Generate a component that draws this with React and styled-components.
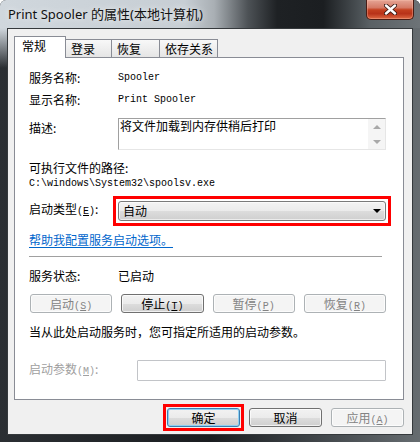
import React from "react";
import styled, { createGlobalStyle } from "styled-components";

const CJK = `"Noto Sans CJK SC", "Noto Sans", sans-serif`;
const MONO = `"Liberation Mono", "DejaVu Sans Mono", monospace`;

const Global = createGlobalStyle`
  html, body { margin: 0; padding: 0; background: #ffffff; }
  body { font-family: ${CJK}; }
  #root { width: 420px; height: 442px; }
`;

const Window = styled.div`
  box-sizing: border-box;
  width: 420px;
  height: 442px;
  display: flex;
  flex-direction: column;
  border-radius: 6px 6px 0 0;
  overflow: hidden;
  background: #1f2225;
`;

const TitleBar = styled.div`
  flex: none;
  height: 28px;
  display: flex;
  align-items: flex-start;
  justify-content: space-between;
  padding: 0 6px 0 8px;
  background: linear-gradient(
    to right,
    #d0d7dd 0%,
    #c7ced4 44%,
    #a9afb4 51%,
    #4d5256 59%,
    #1e2124 66%,
    #1b1e21 77%,
    #596064 88%,
    #6d7377 100%
  );
`;

const Title = styled.span`
  margin-top: 6px;
  font-family: "Noto Sans", ${CJK};
  font-size: 13px;
  line-height: 16px;
  color: #111;
  text-shadow: 0 0 6px rgba(255, 255, 255, 0.85);
  white-space: nowrap;
`;

const CloseButton = styled.div`
  box-sizing: border-box;
  width: 48px;
  height: 20px;
  display: flex;
  align-items: center;
  justify-content: center;
  border: 1px solid #4a1d15;
  border-top: none;
  border-radius: 0 0 5px 5px;
  background: linear-gradient(
    #e5a595 0%,
    #d57a66 40%,
    #c4401f 52%,
    #b83219 72%,
    #df6a43 100%
  );
  box-shadow: inset 0 0 0 1px rgba(255, 200, 180, 0.35);
`;

const Frame = styled.div`
  flex: 1;
  display: flex;
  padding: 0 7px 7px 7px;
  background:
    linear-gradient(to bottom, rgba(208, 215, 221, 1) 0px, rgba(208, 215, 221, 0) 40px) left top / 45% 100% no-repeat,
    linear-gradient(to right, #2b2f33 0%, #1a1d20 50%, #3b4044 72%, #666c70 100%);
`;

const Client = styled.div`
  flex: 1;
  box-sizing: border-box;
  display: flex;
  flex-direction: column;
  border: 1px solid #35393c;
  background: #f0f0f0;
  padding: 7px 8px 7px 6px;
  font-family: ${CJK};
  font-size: 12px;
  color: #000;
`;

const TabRow = styled.div`
  display: flex;
  align-items: flex-end;
  height: 21px;
  position: relative;
  z-index: 1;
`;

const Tab = styled.div`
  box-sizing: border-box;
  width: ${(p) => p.$w}px;
  height: ${(p) => (p.$active ? 22 : 18)}px;
  margin-bottom: ${(p) => (p.$active ? -1 : 0)}px;
  margin-left: ${(p) => (p.$first ? 0 : -1)}px;
  display: flex;
  align-items: center;
  padding-left: ${(p) => (p.$active ? 7 : 5)}px;
  padding-bottom: ${(p) => (p.$active ? 3 : 0)}px;
  border: 1px solid #898c95;
  border-bottom: none;
  background: ${(p) => (p.$active ? "#ffffff" : "linear-gradient(#f8f8f8, #e5e5e5)")};
  position: relative;
  z-index: ${(p) => (p.$active ? 2 : 1)};
  line-height: 14px;
  white-space: nowrap;
`;

const Panel = styled.div`
  box-sizing: border-box;
  height: 343px;
  display: flex;
  flex-direction: column;
  border: 1px solid #898c95;
  background: #ffffff;
  padding: 10px 17px 0 14px;
`;

const InfoRow = styled.div`
  display: grid;
  grid-template-columns: ${(p) => p.$label || 89}px 1fr;
  align-items: ${(p) => p.$align || "center"};
  margin-top: ${(p) => p.$mt || 0}px;
  min-height: ${(p) => p.$h || 20}px;
`;

const Label = styled.span`
  line-height: 20px;
  white-space: nowrap;
  color: ${(p) => (p.$disabled ? "#a0a0a0" : "#000")};
`;

const MonoValue = styled.span`
  font-family: ${MONO};
  font-size: 10px;
  line-height: 20px;
  white-space: nowrap;
`;

const Mn = styled.span`
  font-family: ${MONO};
  font-size: 10px;
  & u { text-decoration: underline; text-underline-offset: 1px; }
`;

const DescBox = styled.div`
  box-sizing: border-box;
  height: 32px;
  display: flex;
  background: #ffffff;
  border-top: 1px solid #a0a0a0;
  border-left: 1px solid #a0a0a0;
  border-right: 1px solid #e6e6e6;
  border-bottom: 1px solid #e6e6e6;
`;

const DescText = styled.div`
  flex: 1;
  padding: 0 0 0 1px;
  line-height: 14px;
`;

const ScrollTrack = styled.div`
  width: 17px;
  display: flex;
  flex-direction: column;
  align-items: center;
  padding-top: 6px;
  gap: 11px;
  background: #f5f5f5;
`;

const Arrow = styled.span`
  width: 0;
  height: 0;
  border-left: 4px solid transparent;
  border-right: 4px solid transparent;
  ${(p) =>
    p.$down
      ? `border-top: 4px solid ${p.$color || "#a9a9a9"};`
      : `border-bottom: 4px solid ${p.$color || "#a9a9a9"};`}
`;

const Line = styled.div`
  margin-top: ${(p) => p.$mt || 0}px;
  line-height: 16px;
  white-space: nowrap;
`;

const MonoLine = styled(Line)`
  font-family: ${MONO};
  font-size: 10px;
`;

const Highlight = styled.div`
  border: 3px solid #ff0000;
  padding: ${(p) => p.$pad ?? 2}px;
  margin: ${(p) => -(3 + (p.$pad ?? 2))}px;
  display: flex;
`;

const Combo = styled.div`
  flex: 1;
  box-sizing: border-box;
  height: 20px;
  display: flex;
  align-items: center;
  justify-content: space-between;
  padding: 0 4px 0 4px;
  border: 1px solid #7a7a7a;
  border-radius: 3px;
  background: linear-gradient(#f3f3f3 0%, #ebebeb 50%, #dddddd 50%, #cfcfcf 100%);
  box-shadow: inset 0 0 0 1px rgba(255, 255, 255, 0.6);
  line-height: 16px;
`;

const HelpLink = styled.a`
  align-self: flex-start;
  margin-top: 10px;
  line-height: 16px;
  color: #0066cc;
  text-decoration: underline;
  text-underline-offset: 2px;
  cursor: pointer;
`;

const Separator = styled.div`
  margin-top: 8px;
  width: 353px;
  height: 1px;
  background: #a0a0a0;
`;

const ButtonGrid = styled.div`
  display: grid;
  grid-template-columns: repeat(4, 1fr);
  gap: 9px;
  margin-top: 8px;
  padding-left: 1px;
`;

const Btn = styled.button`
  box-sizing: border-box;
  height: 19px;
  width: ${(p) => (p.$w ? `${p.$w}px` : "auto")};
  padding: 0;
  font-family: ${CJK};
  font-size: 12px;
  line-height: 17px;
  border-radius: 3px;
  border: 1px solid ${(p) => (p.disabled ? "#adb2b5" : p.$default ? "#3c7fb1" : "#707070")};
  color: ${(p) => (p.disabled ? "#838383" : "#000")};
  background: ${(p) =>
    p.disabled
      ? "#f4f4f4"
      : "linear-gradient(#f2f2f2 0%, #ebebeb 50%, #dddddd 50%, #cfcfcf 100%)"};
  box-shadow: ${(p) =>
    p.$default
      ? "inset 0 0 0 1px #8fd0f2"
      : "inset 0 0 0 1px rgba(255, 255, 255, 0.7)"};
  white-space: nowrap;
  cursor: default;
`;

const ParamInput = styled.div`
  box-sizing: border-box;
  height: 21px;
  border: 1px solid #c2c4c8;
  border-radius: 1px;
  background: #ffffff;
`;

const Footer = styled.div`
  display: flex;
  justify-content: flex-end;
  gap: 9px;
  margin-top: 8px;
`;

const Mnemonic = ({ k }) => (
  <Mn>
    (<u>{k}</u>)
  </Mn>
);

export default function App() {
  return (
    <>
      <Global />
      <Window>
        <TitleBar>
          <Title>Print Spooler 的属性(本地计算机)</Title>
          <CloseButton>
            <svg width="13" height="11" viewBox="0 0 13 11">
              <path d="M2 1.5 L11 9.5 M11 1.5 L2 9.5" stroke="#3a1a14" strokeWidth="4.2" strokeLinecap="round" />
              <path d="M2 1.5 L11 9.5 M11 1.5 L2 9.5" stroke="#ffffff" strokeWidth="2.4" strokeLinecap="round" />
            </svg>
          </CloseButton>
        </TitleBar>
        <Frame>
          <Client>
            <TabRow>
              <Tab $active $first $w={52}>常规</Tab>
              <Tab $w={47}>登录</Tab>
              <Tab $w={49}>恢复</Tab>
              <Tab $w={59}>依存关系</Tab>
            </TabRow>
            <Panel>
              <InfoRow>
                <Label>服务名称:</Label>
                <MonoValue>Spooler</MonoValue>
              </InfoRow>
              <InfoRow $mt={2}>
                <Label>显示名称:</Label>
                <MonoValue>Print Spooler</MonoValue>
              </InfoRow>
              <InfoRow $mt={8} $align="start">
                <Label>描述:</Label>
                <DescBox>
                  <DescText>将文件加载到内存供稍后打印</DescText>
                  <ScrollTrack>
                    <Arrow />
                    <Arrow $down />
                  </ScrollTrack>
                </DescBox>
              </InfoRow>
              <Line $mt={10}>可执行文件的路径:</Line>
              <MonoLine>C:\windows\System32\spoolsv.exe</MonoLine>
              <InfoRow $mt={7}>
                <Label>
                  启动类型<Mnemonic k="E" />:
                </Label>
                <Highlight>
                  <Combo>
                    <span>自动</span>
                    <Arrow $down $color="#000" />
                  </Combo>
                </Highlight>
              </InfoRow>
              <HelpLink>帮助我配置服务启动选项。</HelpLink>
              <Separator />
              <InfoRow $mt={9} $h={16}>
                <Label>服务状态:</Label>
                <Line>已启动</Line>
              </InfoRow>
              <ButtonGrid>
                <Btn disabled>
                  启动<Mnemonic k="S" />
                </Btn>
                <Btn>
                  停止<Mnemonic k="T" />
                </Btn>
                <Btn disabled>
                  暂停<Mnemonic k="P" />
                </Btn>
                <Btn disabled>
                  恢复<Mnemonic k="R" />
                </Btn>
              </ButtonGrid>
              <Line $mt={11}>当从此处启动服务时，您可指定所适用的启动参数。</Line>
              <InfoRow $mt={19} $label={108} $h={21}>
                <Label $disabled>
                  启动参数<Mnemonic k="M" />:
                </Label>
                <ParamInput />
              </InfoRow>
            </Panel>
            <Footer>
              <Highlight $pad={1}>
                <Btn $default $w={73}>确定</Btn>
              </Highlight>
              <Btn $w={73}>取消</Btn>
              <Btn disabled $w={73}>
                应用<Mnemonic k="A" />
              </Btn>
            </Footer>
          </Client>
        </Frame>
      </Window>
    </>
  );
}
